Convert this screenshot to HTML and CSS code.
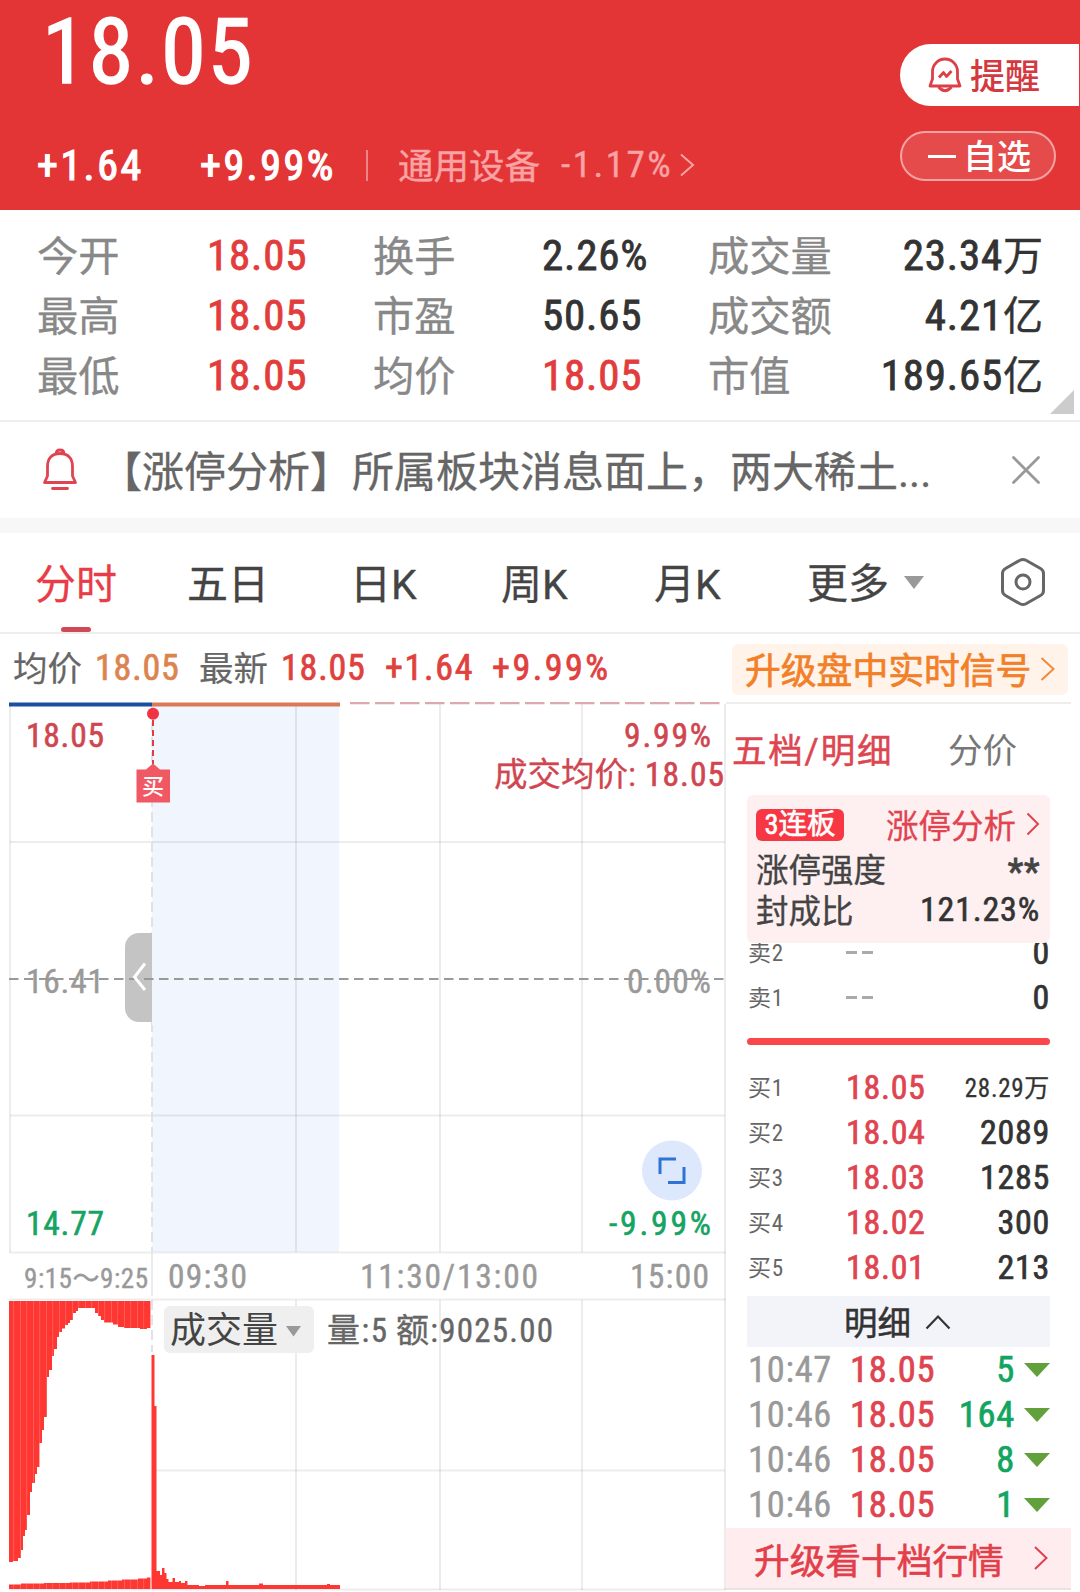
FILE: index.html
```html
<!DOCTYPE html>
<html lang="zh-CN">
<head>
    <meta charset="UTF-8">
    <meta name="viewport" content="width=device-width, initial-scale=1.0">
    <title>分时行情</title>
    <link rel="stylesheet" href="styles.css">
</head>
<body>

<header class="header">
    <div class="quote">
        <div class="price">18.05</div>
        <div class="change">
            <span class="change-value">+1.64</span>
            <span class="change-percent">+9.99%</span>
            <span class="change-divider"></span>
            <span class="sector">通用设备</span>
            <span class="sector-change">-1.17%</span>
            <svg class="sector-arrow" width="16" height="24" viewBox="0 0 16 24"><path d="M2 1.500 14 12 2 22.500"/></svg>
        </div>
    </div>
    <div class="actions">
        <div class="remind">
            <svg width="34" height="36" viewBox="0 0 34 36">
                <path d="M4.500 22V14.500a12.500 12.500 0 0 1 25 0V22l2.500 7H2Z"/>
                <path d="M10.500 30q6.500 7.500 13 0"/>
                <path d="M11 20.500l4.500-5 3 4 5-5.500"/>
            </svg>
            <span>提醒</span>
        </div>
        <div class="favorite"><i class="minus"></i><span>自选</span></div>
    </div>
</header>

<section class="stats">
    <span class="label">今开</span><span class="value up">18.05</span>
    <span class="label">换手</span><span class="value">2.26%</span>
    <span class="label">成交量</span><span class="value right">23.34<span class="unit">万</span></span>
    <span class="label">最高</span><span class="value up">18.05</span>
    <span class="label">市盈</span><span class="value">50.65</span>
    <span class="label">成交额</span><span class="value right">4.21<span class="unit">亿</span></span>
    <span class="label">最低</span><span class="value up">18.05</span>
    <span class="label">均价</span><span class="value up">18.05</span>
    <span class="label">市值</span><span class="value right">189.65<span class="unit">亿</span></span>
    <i class="corner"></i>
</section>

<section class="notice">
    <svg width="36" height="44" viewBox="0 0 36 44">
        <path d="M5.500 28V18.500C5.500 10 10.500 5.500 18 5.500S30.500 10 30.500 18.500V28l3 6.500H2.500ZM14 6q0-4 4-4t4 4M10.500 40.500h15"/>
    </svg>
    <p>【涨停分析】所属板块消息面上，两大稀土<span class="dots">...</span></p>
    <svg class="close" width="28" height="28" viewBox="0 0 28 28"><path d="M1.500 1.500l25 25M26.500 1.500l-25 25"/></svg>
</section>

<nav class="tabs">
    <span class="tab active">分时</span>
    <span class="tab">五日</span>
    <span class="tab">日K</span>
    <span class="tab">周K</span>
    <span class="tab">月K</span>
    <span class="tab more"><span>更多</span><i class="caret"></i></span>
    <svg class="settings" width="46" height="50" viewBox="0 0 46 50">
        <path d="M20 3.200q3-1.600 6 0l14.500 8.300q3 1.700 3 5v17q0 3.300-3 5L26 46.800q-3 1.600-6 0L5.500 38.500q-3-1.700-3-5v-17q0-3.300 3-5Z"/>
        <circle cx="23" cy="25" r="7"/>
    </svg>
</nav>

<div class="summary">
    <span class="name">均价</span><span class="avg">18.05</span>
    <span class="name">最新</span><span class="last">18.05</span>
    <span class="last diff">+1.64</span><span class="last percent">+9.99%</span>
    <div class="signal"><span>升级盘中实时信号</span>
        <svg width="16" height="26" viewBox="0 0 16 26"><path d="M1.500 2 13.500 13 1.500 24"/></svg>
    </div>
</div>

<main class="board">
    <!-- intraday chart + volume -->
    <svg class="chart" width="726" height="890" viewBox="0 702 726 890">
        <rect class="traded" x="152" y="705" width="187" height="547"/>
        <g class="grid">
            <path d="M10 704V1252M296 704V1252M440 704V1252M582 704V1252M725 704V1590"/>
            <path d="M10 842H725M10 1115.500H725M9 1252.500H726M9 1299.500H726M152 1470.500H725M9 1589.500H726"/>
            <path d="M296 1300V1590M440 1300V1590M582 1300V1590M152 1253V1296"/>
        </g>
        <path class="open-line" d="M152 707V1252M152 1300V1352"/>
        <rect class="handle" x="125" y="933" width="40" height="89" rx="14"/>
        <rect class="handle-cover" x="152" y="930" width="15" height="95"/>
        <path class="zero-line" d="M9 979H725"/>
        <path class="handle-arrow" d="M145 963.500 134.500 977 145 990"/>

        <path class="limit-line" d="M350 703H725"/>
        <path class="pre-line" d="M9 704.500H152"/>
        <path class="avg-line" d="M152 704.500H340"/>

        <path class="buy-line" d="M153 720V764"/>
        <circle class="buy-dot" cx="153" cy="713.700" r="6"/>
        <path class="buy-tag" d="M136.500 769.500H146l7-6 7 6h10v33h-33.500Z"/>
        <text class="buy-text" x="142" y="794">买</text>

        <g class="num">
            <text class="up" x="26" y="747" textLength="78">18.05</text>
            <text class="up" x="624" y="747" textLength="87">9.99%</text>
            <text class="up light" x="494" y="786">成交均价:</text>
            <text class="up" x="645" y="786" textLength="79">18.05</text>
            <text class="flat" x="26" y="993" textLength="78">16.41</text>
            <text class="flat" x="627" y="993" textLength="84">0.00%</text>
            <text class="down" x="26" y="1235" textLength="78">14.77</text>
            <text class="down" x="609" y="1235" textLength="102">-9.99%</text>
            <text class="flat small" x="24" y="1288" textLength="124">9:15～9:25</text>
            <text class="flat" x="168" y="1288" textLength="79">09:30</text>
            <text class="flat" x="360" y="1288" textLength="178">11:30/13:00</text>
            <text class="flat" x="630" y="1288" textLength="79">15:00</text>
        </g>

        <circle class="expand" cx="672" cy="1170.500" r="30"/>
        <path class="expand-icon" d="M660 1174V1159H676M668 1182.500H684V1167"/>

        <!-- call auction orders, hanging from the top -->
        <path class="bars" d="M9 1301V1562H13V1561H18V1558H21V1550H23V1536H25V1530H27V1515H30V1492H32V1483H35V1474H37V1467H39.500V1443H42V1430H44V1417H47V1377H49V1370H52V1356H54V1349H57V1337H59V1332H62V1328.500H65V1325H68V1323H70V1320H73V1313H76V1311H78V1308H95V1313H98V1316H101V1320H104V1322.500H113V1324.500H118V1327H124V1328H140V1329H147V1328H150.500V1301Z"/>
        <path class="bars" d="M9 1589V1584.500H21V1583.500H44V1583H70V1582.500H90V1581.500H108V1580.500H122V1579.500H138V1578.500H147V1577.500H150.500V1589Z"/>
        <path class="bar-gaps" d="M9 1445H150.500"/>
        <path class="bars" d="M151.500 1589V1355H154.500V1406H156.500V1571H160V1575H162V1568H164.500V1573H166.500V1579H168.500V1582H172.500V1578H175V1582H179V1581H181V1583H185V1581H187.500V1585H199V1586H205V1585H226V1581H228.500V1585H259V1583.500H263V1585H327V1584H330V1585H340V1589Z"/>

        <rect class="picker" x="164" y="1306" width="150" height="47" rx="6"/>
        <text class="picker-text" x="170" y="1343">成交量</text>
        <path class="picker-caret" d="M286 1326H301L293.500 1336.500Z"/>
        <g class="num volume">
            <text x="327" y="1342" textLength="60">量:5</text>
            <text x="396" y="1342" textLength="157">额:9025.00</text>
        </g>
    </svg>

    <aside class="side">
        <div class="side-tabs"><span class="current">五档/明细</span><span>分价</span></div>

        <div class="limit-card">
            <div class="limit-row">
                <span class="badge">3连板</span>
                <span class="analysis">涨停分析
                    <svg width="14" height="24" viewBox="0 0 14 24"><path d="M1.500 1.500 12 12 1.500 22.500"/></svg>
                </span>
            </div>
            <div class="limit-row"><span>涨停强度</span><span class="stars">**</span></div>
            <div class="limit-row"><span>封成比</span><span class="ratio">121.23%</span></div>
        </div>

        <div class="depth sell">
            <div class="depth-row"><span class="level">卖2</span><span class="none"><i></i><i></i></span><span class="qty">0</span></div>
            <div class="depth-row"><span class="level">卖1</span><span class="none"><i></i><i></i></span><span class="qty">0</span></div>
        </div>
        <div class="depth-line"></div>
        <div class="depth">
            <div class="depth-row"><span class="level">买1</span><span class="bid">18.05</span><span class="qty large">28.29万</span></div>
            <div class="depth-row"><span class="level">买2</span><span class="bid">18.04</span><span class="qty">2089</span></div>
            <div class="depth-row"><span class="level">买3</span><span class="bid">18.03</span><span class="qty">1285</span></div>
            <div class="depth-row"><span class="level">买4</span><span class="bid">18.02</span><span class="qty">300</span></div>
            <div class="depth-row"><span class="level">买5</span><span class="bid">18.01</span><span class="qty">213</span></div>
        </div>

        <div class="detail-title"><span>明细</span>
            <svg width="26" height="16" viewBox="0 0 26 16"><path d="M1.500 14.500 13 2.500 24.500 14.500"/></svg>
        </div>
        <div class="details">
            <div class="detail-row"><span class="time">10:47</span><span class="deal">18.05</span><span class="lots">5</span><i class="sold"></i></div>
            <div class="detail-row"><span class="time">10:46</span><span class="deal">18.05</span><span class="lots">164</span><i class="sold"></i></div>
            <div class="detail-row"><span class="time">10:46</span><span class="deal">18.05</span><span class="lots">8</span><i class="sold"></i></div>
            <div class="detail-row"><span class="time">10:46</span><span class="deal">18.05</span><span class="lots">1</span><i class="sold"></i></div>
        </div>
        <div class="upgrade"><span>升级看十档行情</span>
            <svg width="16" height="26" viewBox="0 0 16 26"><path d="M2 2 13.500 13 2 24"/></svg>
        </div>
    </aside>
</main>

</body>
</html>
```
FILE: styles.css
```css
* {
    box-sizing: border-box;
}
body {
    margin: 0;
    width: 1080px;
    height: 1592px;
    overflow: hidden;
    background: #fff;
    color: #333;
    font-family: Roboto, "Noto Sans CJK SC", sans-serif;
    font-stretch: 87.5%;
    white-space: nowrap;
}
svg {
    display: block;
    fill: none;
    flex: none;
}
i {
    display: block;
    flex: none;
}

/* header */
.header {
    display: flex;
    justify-content: space-between;
    height: 210px;
    background: #e33536;
    color: #fff;
}
.price {
    height: 104px;
    padding-left: 42px;
    font-size: 91px;
    letter-spacing: 1.7px;
    line-height: 105px;
    -webkit-text-stroke: 1.4px;
}
.change {
    display: flex;
    align-items: center;
    height: 60px;
    margin-top: 31px;
    padding-left: 37px;
    font-size: 42px;
    letter-spacing: 2.5px;
    -webkit-text-stroke: 1.2px;
}
.change-value {
    width: 163px;
}
.change-percent {
    width: 166px;
}
.change-divider {
    width: 2px;
    height: 31px;
    margin-right: 30px;
    background: rgba(255, 255, 255, 0.4);
}
.sector {
    width: 163px;
    padding-bottom: 4px;
    font-size: 35.5px;
    letter-spacing: 0;
    color: #f9a3a5;
    -webkit-text-stroke: 0.4px;
}
.sector-change {
    width: 118px;
    padding-bottom: 2px;
    font-size: 37px;
    color: #f9a3a5;
    -webkit-text-stroke: 0.4px;
}
.sector-arrow {
    stroke: #f9a3a5;
    stroke-width: 2;
}
.actions {
    width: 180px;
    padding-top: 44px;
}
.remind {
    display: flex;
    align-items: center;
    gap: 8px;
    width: 179px;
    height: 62px;
    padding-left: 28px;
    border-radius: 31px 0 0 31px;
    background: #fff;
    color: #d3393e;
    font-size: 35px;
    font-weight: 500;
}
.remind span,
.favorite span {
    padding-bottom: 4px;
}
.remind svg {
    stroke: #dc3f48;
    stroke-width: 2.8;
    stroke-linejoin: round;
}
.favorite {
    display: flex;
    align-items: center;
    gap: 7px;
    width: 156px;
    height: 50px;
    margin-top: 25px;
    padding-left: 26px;
    border: 2px solid #f3a3a4;
    border-radius: 25px;
    background: #e64b4c;
    font-size: 34px;
    font-weight: 500;
}
.minus {
    width: 28px;
    height: 3px;
    background: #fff;
}

/* key figures */
.stats {
    position: relative;
    display: grid;
    grid-template-columns: 170px 166px 169px 166px 139px 196px;
    grid-auto-rows: 60px;
    height: 212px;
    padding: 15px 0 0 37px;
    border-bottom: 2px solid #eee;
    line-height: 60px;
}
.label {
    padding-top: 2px;
    font-size: 41.3px;
    color: #888;
    -webkit-text-stroke: 0.3px;
}
.value {
    font-size: 43px;
    letter-spacing: 0.8px;
    -webkit-text-stroke: 0.8px;
}
.right {
    text-align: right;
}
.unit {
    font-size: 40px;
    letter-spacing: 0;
    -webkit-text-stroke: 0.4px;
}
.up {
    color: #e23c3c;
}
.corner {
    position: absolute;
    right: 6px;
    bottom: 6px;
    border-bottom: 24px solid #ccc;
    border-left: 24px solid transparent;
}

/* notice */
.notice {
    display: flex;
    align-items: center;
    height: 111px;
    padding-left: 42px;
    border-bottom: 15px solid #f7f7f7;
}
.notice svg {
    stroke: #df4450;
    stroke-width: 2.8;
    stroke-linejoin: round;
    stroke-linecap: round;
}
.notice p {
    width: 934px;
    margin: 0;
    padding: 0 0 3px 22px;
    font-size: 42px;
    color: #666;
    -webkit-text-stroke: 0.3px;
}
.notice .close {
    stroke: #999;
}

/* tabs */
.tabs {
    display: grid;
    grid-template-columns: 152px 163px 151px 153px 153px 193px 46px;
    align-items: center;
    height: 101px;
    padding-left: 35px;
    border-bottom: 2px solid #eee;
    font-size: 41px;
    font-stretch: 100%;
    color: #444;
    -webkit-text-stroke: 0.3px;
}
.tab {
    position: relative;
    height: 99px;
    line-height: 104px;
}
.active {
    color: #e83c48;
}
.active::after {
    content: "";
    position: absolute;
    left: 26px;
    bottom: 0;
    width: 30px;
    height: 5px;
    border-radius: 3px;
    background: #d04a56;
}
.more {
    display: flex;
    align-items: center;
    gap: 15px;
}
.more span {
    padding-top: 3px;
}
.caret {
    border: 10px solid transparent;
    border-top: 13px solid #999;
    border-bottom: 0;
}
.settings {
    margin-bottom: 1px;
    stroke: #666;
    stroke-width: 3;
}

/* summary line */
.summary {
    display: flex;
    align-items: center;
    height: 68px;
    padding: 0 12px 0 13px;
    font-size: 36px;
    letter-spacing: 0.8px;
    -webkit-text-stroke: 0.7px;
}
.name {
    width: 82px;
    padding-bottom: 4px;
    font-size: 34.5px;
    letter-spacing: 0;
    color: #666;
    -webkit-text-stroke: 0.2px;
}
.avg {
    width: 104px;
    color: #dc8450;
}
.last {
    width: 104px;
    color: #e0403e;
}
.diff {
    width: 107px;
    letter-spacing: 1.7px;
}
.percent {
    width: auto;
    letter-spacing: 2.5px;
}
.signal {
    display: flex;
    align-items: center;
    justify-content: space-between;
    width: 336px;
    height: 51px;
    margin: 2px 0 0 auto;
    padding: 0 12px 0 13px;
    border-radius: 6px;
    background: #fff3ea;
    color: #f28028;
    font-size: 35.8px;
    letter-spacing: 0;
}
.signal span {
    padding-bottom: 2px;
}
.signal svg {
    stroke: #f28a3c;
    stroke-width: 2;
}

/* chart */
.board {
    display: flex;
}
.chart text {
    fill: #666;
}
.traded {
    fill: #f0f5fe;
}
.grid {
    stroke: #000;
    stroke-opacity: 0.075;
    stroke-width: 2;
}
.open-line {
    stroke: #dfe2e8;
    stroke-width: 2;
    stroke-dasharray: 10 5;
}
.zero-line {
    stroke: #999;
    stroke-width: 2;
    stroke-dasharray: 9.500 5.500;
}
.limit-line {
    stroke: #dca8ab;
    stroke-width: 2.4;
    stroke-dasharray: 19.500 5.500;
}
.pre-line {
    stroke: #1c4fa2;
    stroke-width: 4;
}
.avg-line {
    stroke: #da7958;
    stroke-width: 4;
}
.handle {
    fill: #c4c4c4;
}
.handle-cover {
    fill: #f0f5fe;
}
.handle-arrow {
    stroke: #fff;
    stroke-width: 3;
}
.buy-line {
    stroke: #e03c48;
    stroke-width: 2;
    stroke-dasharray: 6 4;
}
.buy-dot {
    fill: #f03442;
}
.buy-tag {
    fill: #f05864;
}
.chart .buy-text {
    fill: #fff;
    font-size: 22px;
    font-weight: 500;
}
.num {
    font-size: 33.5px;
    stroke-width: 0.6px;
}
.chart .up {
    fill: #d04650;
    stroke: #d04650;
}
.chart .light {
    stroke-width: 0.3px;
}
.chart .down {
    fill: #16a363;
    stroke: #16a363;
}
.chart .flat {
    fill: #999;
    stroke: #999;
    stroke-width: 0.4px;
}
.small {
    font-size: 27px;
}
.expand {
    fill: #dde8fd;
}
.expand-icon {
    stroke: #2f74d4;
    stroke-width: 3;
}
.bars {
    fill: #ff3732;
}
.bar-gaps {
    stroke: #fff;
    stroke-opacity: 0.3;
    stroke-width: 288;
    stroke-dasharray: 0.600 5.900;
    stroke-dashoffset: -4.500;
}
.picker {
    fill: #efefef;
}
.chart .picker-text {
    font-size: 36px;
    fill: #444;
}
.picker-caret {
    fill: #999;
}
.volume {
    font-size: 33px;
    stroke: #666;
    stroke-width: 0.4px;
}

/* order book */
.side {
    width: 345px;
    border-top: 2px solid #eee;
}
.side-tabs {
    display: flex;
    height: 91px;
    padding-left: 6px;
    font-size: 34.5px;
    line-height: 94px;
    color: #777;
}
.side-tabs .current {
    width: 216px;
    color: #dd4650;
    font-stretch: 100%;
    letter-spacing: 1.8px;
    -webkit-text-stroke: 0.5px;
}
.limit-card {
    position: relative;
    width: 303px;
    height: 148px;
    margin-left: 21px;
    padding: 11px 10px 0 9px;
    border-radius: 6px;
    background: #fef0f1;
    font-size: 32.5px;
    color: #444;
    -webkit-text-stroke: 0.3px;
}
.limit-row {
    display: flex;
    align-items: center;
    justify-content: space-between;
    height: 41px;
}
.badge {
    width: 88px;
    height: 32px;
    margin-bottom: 3px;
    border-radius: 6px;
    background: #f73844;
    color: #fff;
    font-size: 28.5px;
    line-height: 32px;
    text-align: center;
    -webkit-text-stroke: 0.6px;
}
.analysis {
    display: flex;
    align-items: center;
    gap: 10px;
    margin-bottom: 6px;
    color: #df4450;
}
.analysis svg {
    stroke: #df4450;
    stroke-width: 2;
}
.ratio {
    font-size: 34px;
    letter-spacing: 0.8px;
    line-height: 34px;
    color: #333;
    -webkit-text-stroke: 0.6px;
}
.stars {
    height: 28px;
    padding-top: 1px;
    font-size: 36px;
    line-height: 34px;
    letter-spacing: 0.6px;
    -webkit-text-stroke: 0.8px;
}
.depth {
    width: 303px;
    margin-left: 22px;
}
.sell {
    height: 95px;
    margin-top: -14px;
}
.depth-row {
    display: flex;
    align-items: center;
    height: 45px;
    font-size: 34px;
    letter-spacing: 0.7px;
    -webkit-text-stroke: 0.7px;
}
.level {
    width: 98px;
    padding-bottom: 1px;
    font-size: 23px;
    color: #666;
    -webkit-text-stroke: 0;
}
.none {
    display: flex;
    gap: 5px;
    padding-top: 1px;
}
.none i {
    width: 11px;
    height: 3px;
    background: #aaa;
}
.bid {
    color: #df4450;
}
.qty {
    flex: 1;
    padding-right: 1px;
    text-align: right;
}
.large {
    padding-bottom: 1px;
    font-size: 25px;
    -webkit-text-stroke: 0.3px;
}
.depth-line {
    width: 303px;
    height: 7px;
    margin: 14px 0 19px 21px;
    border-radius: 4px;
    background: #f9474c;
}
.detail-title {
    display: flex;
    align-items: center;
    justify-content: center;
    gap: 14px;
    width: 303px;
    height: 51px;
    margin: 7px 0 0 21px;
    padding-right: 2px;
    background: #f3f4f9;
    font-size: 33.5px;
    -webkit-text-stroke: 0.5px;
}
.detail-title span {
    padding-bottom: 3px;
}
.detail-title svg {
    stroke: #333;
    stroke-width: 2.2;
}
.details {
    width: 303px;
    height: 181px;
    margin-left: 21px;
}
.detail-row {
    display: flex;
    align-items: center;
    height: 45px;
    font-size: 36.5px;
    letter-spacing: 0.7px;
    -webkit-text-stroke: 0.7px;
}
.time {
    width: 103px;
    padding-left: 1px;
    color: #999;
    -webkit-text-stroke: 0.4px;
}
.deal {
    color: #df4450;
}
.lots {
    flex: 1;
    padding-right: 9px;
    text-align: right;
    color: #12a562;
}
.sold {
    border: 13px solid transparent;
    border-top: 14px solid #62a03c;
    border-bottom: 0;
}
.upgrade {
    display: flex;
    align-items: center;
    justify-content: space-between;
    height: 62px;
    padding: 0 22px 0 28px;
    border-bottom: 2px solid #e8e4e6;
    background: #feecee;
    color: #e33f4a;
    font-size: 35.7px;
    -webkit-text-stroke: 0.6px;
}
.upgrade svg {
    stroke: #e33f4a;
    stroke-width: 2;
}
```
